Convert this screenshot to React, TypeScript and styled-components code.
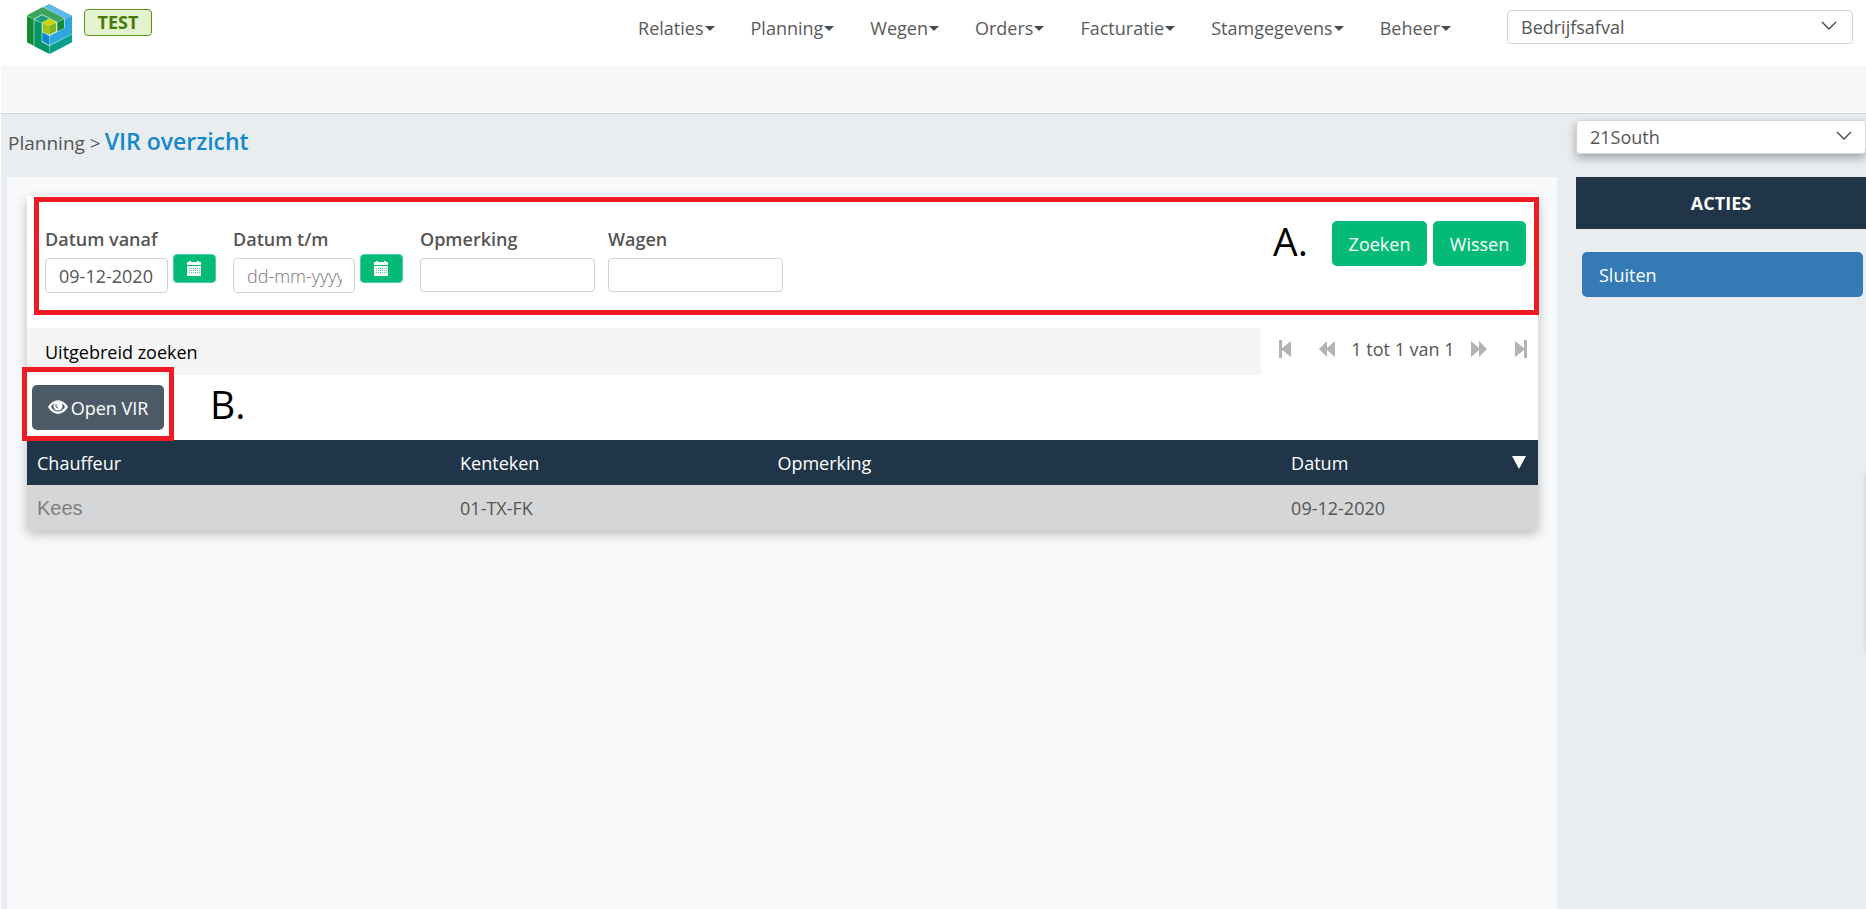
import React from "react";
import styled, { createGlobalStyle } from "styled-components";

const GlobalStyle = createGlobalStyle`
  *, *::before, *::after { box-sizing: border-box; }
  html, body { margin: 0; padding: 0; }
  body {
    background: #ffffff;
    color: #555555;
    font-family: "Open Sans", "Liberation Sans", sans-serif;
    font-size: 18px;
    line-height: 24px;
    overflow-x: hidden;
  }
  button, input, select { font: inherit; color: inherit; }
`;

const Page = styled.div`
  display: flex;
  flex-direction: column;
  min-height: 100vh;
`;

const Header = styled.header`
  display: flex;
  align-items: flex-start;
  height: 66px;
  padding: 0 13px 0 27px;
`;

const LogoLink = styled.a`
  display: block;
  padding-top: 4px;
  svg { display: block; }
`;

const EnvBadge = styled.span`
  margin: 9px 0 0 12px;
  width: 68px;
  height: 27px;
  line-height: 25px;
  text-align: center;
  font-weight: 700;
  font-size: 18px;
  color: #457a08;
  background: #e4f3cf;
  border: 1px solid #5a9216;
  border-radius: 4px;
`;

const Nav = styled.nav`
  display: flex;
  gap: 36px;
  margin-left: auto;
  padding-top: 16px;
`;

const NavLink = styled.a`
  display: flex;
  align-items: center;
  gap: 1px;
  color: #5a5a5a;
  text-decoration: none;
  &::after {
    content: "";
    border: 5px solid transparent;
    border-top-color: #4a4a4a;
    border-bottom: 0;
  }
`;

const SelectBox = styled.div<{ $raised?: boolean }>`
  position: relative;
  background: #ffffff;
  border-radius: 4px;
  box-shadow: ${(p) => (p.$raised ? "0 4px 10px rgba(0, 0, 0, 0.3)" : "none")};
  svg {
    position: absolute;
    right: ${(p) => (p.$raised ? 14 : 16)}px;
    top: 10px;
    pointer-events: none;
  }
`;

const Select = styled.select`
  display: block;
  appearance: none;
  width: 100%;
  height: 34px;
  padding: 0 40px 0 13px;
  border: 1px solid #d4d4d4;
  border-radius: 4px;
  background: transparent;
`;

const HeaderSelect = styled(SelectBox)`
  width: 346px;
  margin: 10px 0 0 56px;
`;

const SubBar = styled.div`
  height: 47px;
  margin-left: 1px;
  background: #f7f7f7;
  border-bottom: 1px solid #ffffff;
`;

const Body = styled.div`
  position: relative;
  flex: 1;
  display: grid;
  grid-template-columns: minmax(0, 1fr) 290px;
  column-gap: 19px;
  margin-left: 1px;
  padding-left: 6px;
  background: #e9edf0;
  border-top: 1px solid #d2d4d4;
  overflow: hidden;
`;

const DrawerEdge = styled.div`
  position: absolute;
  top: 360px;
  left: 100%;
  width: 10px;
  height: 178px;
  box-shadow: 0 0 5px rgba(0, 0, 0, 0.15);
`;

const Main = styled.main`
  display: flex;
  flex-direction: column;
`;

const Crumbs = styled.div`
  display: flex;
  align-items: baseline;
  gap: 4px;
  height: 63px;
  padding: 11px 0 0 1px;
  font-size: 19px;
  line-height: 32px;
`;

const Title = styled.h1`
  margin: 0;
  font-size: 23px;
  line-height: 32px;
  font-weight: 600;
  color: #1388cc;
`;

const Panel = styled.div`
  flex: 1;
  padding: 19px 19px 40px 20px;
  background: #f8f9fb;
`;

const Card = styled.section`
  position: relative;
  padding-top: 1px;
  background: #ffffff;
  border-radius: 0 0 4px 4px;
  box-shadow: 0 4px 12px rgba(0, 0, 0, 0.25);
`;

const Marked = styled.div`
  border: 5px solid #ed1c24;
`;

const FilterFrame = styled(Marked)`
  position: relative;
  display: flex;
  align-items: flex-start;
  height: 118px;
  margin: 0 -1px 0 7px;
  padding: 19px 8px 0 6px;
`;

const FilterForm = styled.form`
  flex: 1;
  display: flex;
  align-items: flex-start;
`;

const Field = styled.div<{ $width: number }>`
  width: ${(p) => p.$width}px;
  padding-top: 6px;
`;

const Label = styled.label`
  display: block;
  height: 31px;
  font-weight: 600;
`;

const FieldRow = styled.div`
  display: flex;
  align-items: flex-start;
  gap: 5px;
`;

const TextInput = styled.input<{ $width: number }>`
  display: block;
  width: ${(p) => p.$width}px;
  height: 34px;
  padding: 0 12px 0 13px;
  border: 1px solid #d2d2d2;
  border-radius: 4px;
  background: #ffffff;
  &::placeholder { color: #777777; opacity: 1; font-weight: 300; }
`;

const DateInput = styled(TextInput)`
  height: 35px;
`;

const CalendarButton = styled.button`
  display: flex;
  align-items: center;
  justify-content: center;
  width: 43px;
  height: 29px;
  margin-top: -4px;
  padding: 0 1px 0 0;
  border: 1px solid #4fcf9f;
  border-radius: 4px;
  background: #04ba77;
  color: #ffffff;
`;

const Note = styled.span`
  font-size: 39px;
  line-height: 48px;
  color: #000000;
`;

const FilterActions = styled.div`
  display: flex;
  gap: 6px;
  margin-left: auto;
`;

const FilterNote = styled(Note)`
  margin: -4px 18px 0 0;
`;

const ToolbarNote = styled(Note)`
  padding-bottom: 8px;
`;

const Button = styled.button<{ $color: string; $width: string }>`
  width: ${(p) => p.$width};
  height: 45px;
  padding: 0 12px;
  border: 0;
  border-radius: 5px;
  background: ${(p) => p.$color};
  color: #ffffff;
`;

const SearchRow = styled.div`
  display: flex;
  height: 47px;
  margin-top: 13px;
`;

const Advanced = styled.button`
  flex: 1;
  padding: 0 18px;
  border: 0;
  background: #f4f4f4;
  color: #000000;
  text-align: left;
`;

const Pager = styled.div`
  display: flex;
  align-items: center;
  justify-content: space-between;
  width: 277px;
  padding: 0 11px 6px 18px;
  white-space: nowrap;
`;

const PagerButton = styled.button`
  display: flex;
  padding: 0;
  border: 0;
  background: none;
  color: #b3b3b3;
  &:first-child { margin-right: 12px; }
  &:last-child { margin-left: 12px; }
`;

const Toolbar = styled.div`
  display: flex;
  align-items: center;
  height: 65px;
`;

const OpenFrame = styled(Marked)`
  position: relative;
  flex: none;
  width: 152px;
  height: 74px;
  margin: -7px 36px 0 -5px;
  padding: 13px 5px 0;
`;

const OpenButton = styled(Button)`
  display: flex;
  align-items: center;
  justify-content: center;
  gap: 3px;
  padding: 0;
`;

const Table = styled.table`
  width: 100%;
  table-layout: fixed;
  border-collapse: collapse;
  text-align: left;
  thead tr { background: #203547; color: #ffffff; }
  tbody td { background: #d5d6d7; }
  th, td { height: 45px; padding: 0 10px; }
  th { font-weight: 400; }
  td:first-child { border-radius: 0 0 0 4px; }
  td:last-child { border-radius: 0 0 4px 0; }
`;

const SortHead = styled.div`
  display: flex;
  align-items: center;
  justify-content: space-between;
  padding-right: 2px;
`;

const SortArrow = styled.span`
  border: 7px solid transparent;
  border-top: 13px solid #ffffff;
  border-bottom: 0;
`;

const DriverName = styled.span`
  font-family: "Liberation Sans", Arial, sans-serif;
  font-size: 20px;
  color: #808080;
`;

const Aside = styled.aside`
  padding-top: 6px;
`;

const AsideTitle = styled.h2`
  margin: 23px 0;
  height: 52px;
  line-height: 52px;
  font-size: 18px;
  font-weight: 700;
  text-align: center;
  color: #ffffff;
  background: #203547;
`;

const ActionList = styled.div`
  padding: 0 3px 0 6px;
`;

const ActionButton = styled(Button)`
  display: block;
  padding: 0 17px;
  text-align: left;
`;

const Logo = () => (
  <svg width="45" height="50" viewBox="0 0 135 150" aria-hidden="true">
    <path d="M67 0 135 35V115L67 150 0 115V35Z" fill="#cfe9e2" />
    <path d="M50 8 67 0 135 35 115 45Z" fill="#5fb9e9" />
    <path d="M113 46 135 35V89L68 124V96L113 72Z" fill="#2ca6df" />
    <path d="M46 85 67 96V124L46 112Z" fill="#0c87cd" />
    <path d="M0 34 47 9 111 43 91 54 45 30 20 45Z" fill="#3ba65b" />
    <path d="M0 36 20 46V125L0 115Z" fill="#128b35" />
    <path d="M91 55 111 45V73L91 82Z" fill="#128b35" />
    <path d="M23 46 45 33 89 54 67 43 44 56Z" fill="#1b9f80" />
    <path d="M22 48 44 57V114L67 126V150L22 127Z" fill="#079566" />
    <path d="M68 126 135 91V115L68 150Z" fill="#08a08b" />
    <path d="M47 55 67 44 87 55 67 65Z" fill="#c9d300" />
    <path d="M47 56 67 66V92L47 83Z" fill="#a3c410" />
    <path d="M67 66 87 56V82L67 92Z" fill="#83b31b" />
  </svg>
);

const Chevron = () => (
  <svg width="16" height="12" viewBox="0 0 16 12" fill="none" stroke="#444" aria-hidden="true">
    <path d="M1 2 8 9 15 2" strokeWidth="1.300" />
  </svg>
);

const CalendarIcon = () => (
  <svg width="14" height="15" viewBox="0 0 14 15" fill="currentColor" aria-hidden="true">
    <path d="M0 1h2V0h2v1h6V0h2v1h2v3H0zM0 5h14v10H0z" />
    <g stroke="#04ba77" strokeOpacity="0.7" strokeDasharray="1 1">
      <path d="M2 7.500h11M2 9.500h11M2 11.500h11" />
    </g>
  </svg>
);

const EyeIcon = () => (
  <svg width="20" height="15" viewBox="0 0 20 15" aria-hidden="true">
    <path d="M0 7C5-2 15-2 20 7 15 16 5 16 0 7Z" fill="#fff" />
    <path d="M3 7C4 5 5 4 6 3.500A5 5 0 0 0 14 3.500C15 4 16 5 17 7 13 13 7 13 3 7Z" fill="#4d5b68" />
    <circle cx="10" cy="6" r="4.500" fill="#fff" />
    <path d="M8 4v2a2 2 0 0 0 2 2" fill="none" stroke="#4d5b68" />
  </svg>
);

const FirstIcon = ({ flip = false }: { flip?: boolean }) => (
  <svg width="12" height="18" viewBox="0 0 12 18" fill="currentColor" aria-hidden="true">
    <path d={flip ? "M12 0v18H9V10L0 17V1L9 8V0Z" : "M0 0v18h3V10l9 7V1L3 8V0Z"} />
  </svg>
);

const SkipIcon = ({ flip = false }: { flip?: boolean }) => (
  <svg width="17" height="16" viewBox="0 0 17 16" fill="currentColor" aria-hidden="true">
    <path d={flip ? "M17 8 9 0V7L1 0V16L9 9V16Z" : "M0 8 8 0V7L16 0V16L8 9V16Z"} />
  </svg>
);

const menu = ["Relaties", "Planning", "Wegen", "Orders", "Facturatie", "Stamgegevens", "Beheer"];

export default function App() {
  return (
    <>
      <GlobalStyle />
      <Page>
        <Header>
          <LogoLink href="#" aria-label="Home"><Logo /></LogoLink>
          <EnvBadge>TEST</EnvBadge>
          <Nav>
            {menu.map((item) => <NavLink key={item} href="#">{item}</NavLink>)}
          </Nav>
          <HeaderSelect>
            <Select aria-label="Afdeling"><option>Bedrijfsafval</option></Select>
            <Chevron />
          </HeaderSelect>
        </Header>
        <SubBar />
        <Body>
          <Main>
            <Crumbs>Planning &gt; <Title>VIR overzicht</Title></Crumbs>
            <Panel>
              <Card>
                <FilterFrame>
                  <FilterForm onSubmit={(e) => e.preventDefault()}>
                    <Field $width={188}>
                      <Label htmlFor="from">Datum vanaf</Label>
                      <FieldRow>
                        <DateInput id="from" $width={123} defaultValue="09-12-2020" />
                        <CalendarButton type="button" aria-label="Kies datum vanaf"><CalendarIcon /></CalendarButton>
                      </FieldRow>
                    </Field>
                    <Field $width={187}>
                      <Label htmlFor="to">Datum t/m</Label>
                      <FieldRow>
                        <DateInput id="to" $width={122} placeholder="dd-mm-yyyy" />
                        <CalendarButton type="button" aria-label="Kies datum t/m"><CalendarIcon /></CalendarButton>
                      </FieldRow>
                    </Field>
                    <Field $width={188}>
                      <Label htmlFor="remark">Opmerking</Label>
                      <TextInput id="remark" $width={175} />
                    </Field>
                    <Field $width={188}>
                      <Label htmlFor="truck">Wagen</Label>
                      <TextInput id="truck" $width={175} />
                    </Field>
                    <FilterActions>
                      <FilterNote>A.</FilterNote>
                      <Button type="submit" $color="#04ba77" $width="95px">Zoeken</Button>
                      <Button type="reset" $color="#04ba77" $width="93px">Wissen</Button>
                    </FilterActions>
                  </FilterForm>
                </FilterFrame>
                <SearchRow>
                  <Advanced type="button">Uitgebreid zoeken</Advanced>
                  <Pager>
                    <PagerButton aria-label="Eerste pagina"><FirstIcon /></PagerButton>
                    <PagerButton aria-label="Vorige pagina"><SkipIcon /></PagerButton>
                    <span>1 tot 1 van 1</span>
                    <PagerButton aria-label="Volgende pagina"><SkipIcon flip /></PagerButton>
                    <PagerButton aria-label="Laatste pagina"><FirstIcon flip /></PagerButton>
                  </Pager>
                </SearchRow>
                <Toolbar>
                  <OpenFrame>
                    <OpenButton type="button" $color="#4d5b68" $width="132px"><EyeIcon />Open VIR</OpenButton>
                  </OpenFrame>
                  <ToolbarNote>B.</ToolbarNote>
                </Toolbar>
                <Table>
                  <colgroup>
                    <col style={{ width: "28%" }} />
                    <col style={{ width: "21%" }} />
                    <col style={{ width: "34%" }} />
                    <col style={{ width: "17%" }} />
                  </colgroup>
                  <thead>
                    <tr>
                      <th>Chauffeur</th>
                      <th>Kenteken</th>
                      <th>Opmerking</th>
                      <th><SortHead>Datum<SortArrow /></SortHead></th>
                    </tr>
                  </thead>
                  <tbody>
                    <tr>
                      <td><DriverName>Kees</DriverName></td>
                      <td>01-TX-FK</td>
                      <td />
                      <td>09-12-2020</td>
                    </tr>
                  </tbody>
                </Table>
              </Card>
            </Panel>
          </Main>
          <Aside>
            <SelectBox $raised>
              <Select aria-label="Locatie"><option>21South</option></Select>
              <Chevron />
            </SelectBox>
            <AsideTitle>ACTIES</AsideTitle>
            <ActionList>
              <ActionButton type="button" $color="#337ab7" $width="100%">Sluiten</ActionButton>
            </ActionList>
          </Aside>
          <DrawerEdge />
        </Body>
      </Page>
    </>
  );
}
